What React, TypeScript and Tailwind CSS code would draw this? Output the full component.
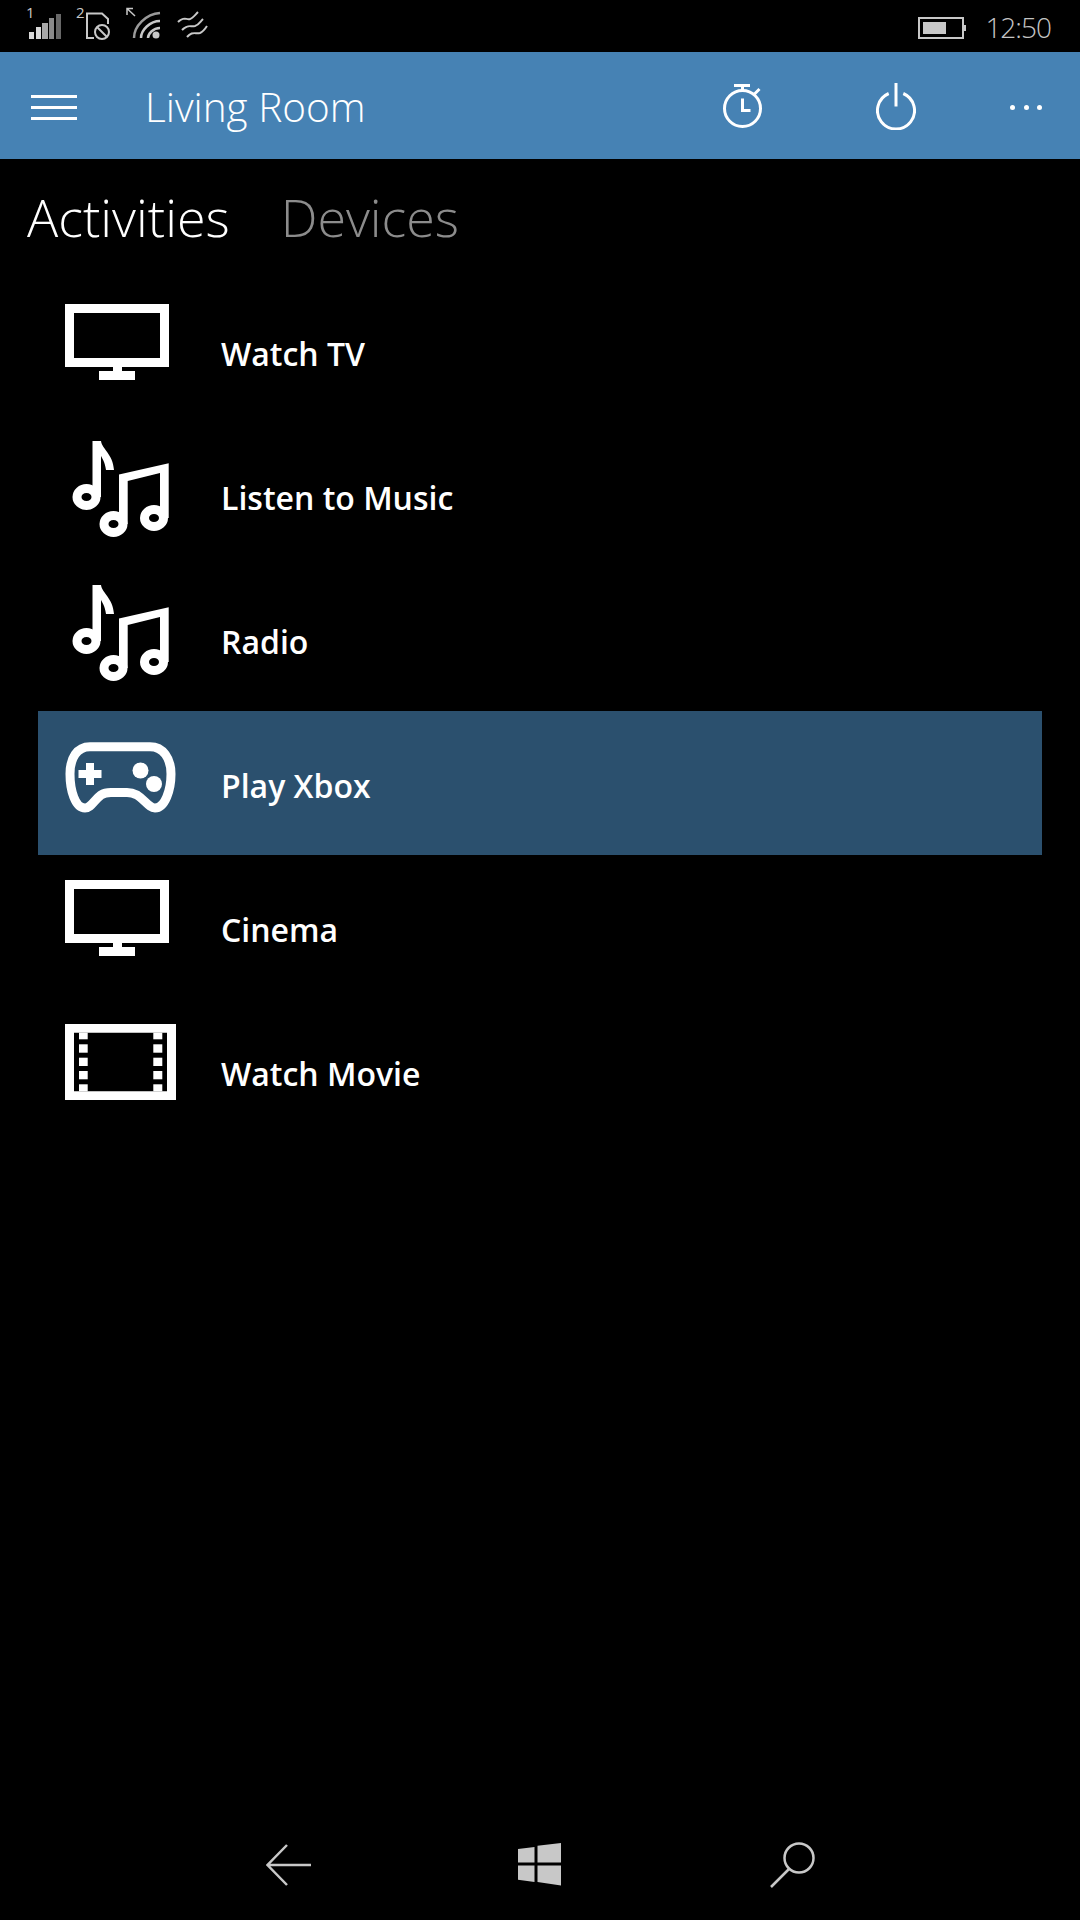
const font = { fontFamily: '"Open Sans", sans-serif' };

function TvIcon() {
  return (
    <svg width="112" height="144" viewBox="0 1 112 144" fill="white">
      <path fillRule="evenodd" d="M0 26H104V89H0ZM9 35V80H95V35Z" />
      <rect x="48" y="88" width="9" height="6" />
      <rect x="34" y="93" width="36" height="9" />
    </svg>
  );
}

function MusicIcon() {
  return (
    <svg width="112" height="144" viewBox="0 1 112 144" fill="white">
      <ellipse cx="21.5" cy="75" rx="9.5" ry="8.5" fill="none" stroke="white" strokeWidth="9" />
      <path d="M27.5 19H36C37 27 48 32 49 48H41C40 40 37 36 36 34V75H27.5Z" />
      <ellipse cx="48.5" cy="102" rx="9.5" ry="8.5" fill="none" stroke="white" strokeWidth="9" />
      <ellipse cx="89" cy="96" rx="9.5" ry="8.5" fill="none" stroke="white" strokeWidth="9" />
      <path d="M54 52.5L103.7 41.3V96H95V51L62.7 59V102H54Z" />
    </svg>
  );
}

function GamepadIcon() {
  return (
    <svg width="112" height="144" viewBox="0 1 112 144" fill="white">
      <path
        fill="none"
        stroke="white"
        strokeWidth="9"
        d="M25 36.7H85C98 36.7 106 48 106 64C106 80 100 98 90 98C84 98 80 90 72 85C68 83 65 82.5 62 82.5H46C42 82.5 39 83 36 85C29 90 26 98 20 98C10 98 5 80 5 64C5 48 12 36.7 25 36.7Z"
      />
      <path d="M21 53H29V60H36.5V68H29V75H21V68H13.5V60H21Z" />
      <circle cx="75.5" cy="60.5" r="8" />
      <circle cx="89" cy="74" r="8" />
    </svg>
  );
}

function FilmIcon() {
  const holes = [
    { y: 34.7, h: 6.6 },
    { y: 46.3, h: 8.4 },
    { y: 59.7, h: 8.3 },
    { y: 73, h: 8.3 },
    { y: 86.3, h: 7 },
  ];
  return (
    <svg width="112" height="144" viewBox="0 1 112 144" fill="white">
      <path fillRule="evenodd" d="M0 26H111V102H0ZM9 34.7V93.3H102V34.7Z" />
      {holes.map((h) => (
        <g key={h.y}>
          <rect x="14" y={h.y} width="8.7" height={h.h} />
          <rect x="88.3" y={h.y} width="9" height={h.h} />
        </g>
      ))}
    </svg>
  );
}

const activities = [
  { label: "Watch TV", icon: <TvIcon /> },
  { label: "Listen to Music", icon: <MusicIcon /> },
  { label: "Radio", icon: <MusicIcon /> },
  { label: "Play Xbox", icon: <GamepadIcon />, selected: true },
  { label: "Cinema", icon: <TvIcon /> },
  { label: "Watch Movie", icon: <FilmIcon /> },
];

function StatusBar() {
  return (
    <div className="flex h-[52px] items-start justify-between bg-black">
      <svg width="230" height="52" viewBox="0 0 230 52" fill="none" stroke="#c8c8c8">
        {/* sim 1 signal */}
        <text x="26" y="18" fontSize="15" fill="#c8c8c8" stroke="none" style={font}>1</text>
        <rect x="29" y="32" width="5" height="7" fill="#d8d8d8" stroke="none" />
        <rect x="36" y="27" width="5" height="12" fill="#d8d8d8" stroke="none" />
        <rect x="42" y="23" width="6" height="16" fill="#a8a8a8" stroke="none" />
        <rect x="49" y="18" width="5" height="21" fill="#8a8a8a" stroke="none" />
        <rect x="56" y="14" width="5" height="25" fill="#686868" stroke="none" />
        {/* sim 2 */}
        <text x="76" y="18" fontSize="15" fill="#c8c8c8" stroke="none" style={font}>2</text>
        <path d="M108 24V19L102 13.5H87V38H94" strokeWidth="2" />
        <circle cx="102" cy="32" r="7" strokeWidth="2" />
        <path d="M97 27L107 37" strokeWidth="2" />
        {/* wifi */}
        <path d="M127 15V8.5H133M127 8.5L135 16" strokeWidth="1.5" />
        <path d="M134 38C134 26 146 14 160 13" stroke="#9a9a9a" strokeWidth="2.5" />
        <path d="M141 38C141 30 150 21 160 21" strokeWidth="2.5" />
        <path d="M148 38C148 34 153 28 160 28" strokeWidth="2.5" />
        <circle cx="156" cy="35" r="3.5" fill="#c8c8c8" stroke="none" />
        {/* vpn waves */}
        <path d="M178 22C184 16 186 20 190 19C193 18 195 15 198 12" strokeWidth="2" />
        <path d="M182 30C188 24 190 27 195 26C199 25 200 22 203 19" strokeWidth="2" />
        <path d="M187 37C192 31 195 34 200 33C203 32 205 29 207 26" strokeWidth="2" />
      </svg>
      <div className="flex items-center pt-[14px] pr-[29px]">
        <svg width="48" height="24" viewBox="0 0 48 24" fill="none" className="mr-[19px]">
          <rect x="1" y="3" width="44" height="20" stroke="#c8c8c8" strokeWidth="2" />
          <rect x="5" y="7" width="23" height="12" fill="#c8c8c8" />
          <rect x="46" y="10" width="2" height="6" fill="#c8c8c8" />
        </svg>
        <span className="text-[28px] leading-[26px] font-light tracking-[-1px] text-[#c4c4c4]" style={font}>12:50</span>
      </div>
    </div>
  );
}

function AppBar() {
  return (
    <div className="flex h-[107px] items-center bg-[#4682b4] text-white">
      <div className="mt-[3px] ml-[31px] flex w-[46px] flex-col gap-[8px]">
        <div className="h-[3px] bg-white" />
        <div className="h-[3px] bg-white" />
        <div className="h-[3px] bg-white" />
      </div>
      <h1 className="mt-[2px] ml-[68px] flex-1 text-[40.5px] leading-[48px] font-light" style={font}>Living Room</h1>
      <svg width="40" height="48" viewBox="0 0 40 48" fill="none" stroke="white" strokeWidth="3" className="mr-[113px]">
        <circle cx="19.5" cy="26.5" r="18" />
        <path d="M11 3.5H27M19.5 3.5V9M31 12.5L36.5 7M19.5 16.5V28.5H27.5" />
      </svg>
      <svg width="40" height="48" viewBox="0 0 40 48" fill="none" stroke="white" strokeWidth="3" className="mr-[94px]">
        <path d="M12.7 11.5A18.5 18.5 0 1 0 27.3 11.5" />
        <path d="M20 1V24.5" />
      </svg>
      <div className="mt-[3px] mr-[38px] flex gap-[8.5px]">
        <div className="h-[5px] w-[5px] rounded-full bg-white" />
        <div className="h-[5px] w-[5px] rounded-full bg-white" />
        <div className="h-[5px] w-[5px] rounded-full bg-white" />
      </div>
    </div>
  );
}

function NavBar() {
  return (
    <div className="flex h-[110px] items-center bg-black pl-[266px]">
      <svg width="46" height="42" viewBox="0 0 46 42" fill="none" stroke="#c8c8c8" strokeWidth="2.5">
        <path d="M21 1L1.5 21L21 41M1.5 21H45" />
      </svg>
      <svg width="43" height="44" viewBox="0 0 43 44" fill="#c8c8c8" className="ml-[206px]">
        <path d="M0 6L16.5 4V19.5H0ZM19.5 2.7L43 0V19.5H19.5ZM0 22.5H16.5V39L0 36.7ZM19.5 22.5H43V42.5L19.5 39Z" />
      </svg>
      <svg width="46" height="46" viewBox="0 0 46 46" fill="none" stroke="#c8c8c8" strokeWidth="2.5" className="ml-[208px]">
        <circle cx="30" cy="16" r="14.5" />
        <path d="M20 27L2 45" />
      </svg>
    </div>
  );
}

export default function App() {
  return (
    <div className="flex h-[1920px] w-[1080px] flex-col bg-black text-white" style={font}>
      <StatusBar />
      <AppBar />
      <div className="flex h-[120px] items-center gap-[51px] pb-[4px] pl-[27px] text-[52px] leading-[60px] font-light">
        <span>Activities</span>
        <span className="text-[#8c8c8c]">Devices</span>
      </div>
      <ul className="flex flex-1 flex-col px-[38px]">
        {activities.map((a) => (
          <li
            key={a.label}
            className={[
              "flex h-[144px] w-[1004px] items-center",
              a.selected ? "bg-[#2b506e]" : "",
            ].join(" ")}
          >
            <div className="ml-[27px] h-[144px] w-[112px]">{a.icon}</div>
            <span className="ml-[44px] pt-[6px] text-[32px] leading-[44px] font-semibold">{a.label}</span>
          </li>
        ))}
      </ul>
      <NavBar />
    </div>
  );
}
